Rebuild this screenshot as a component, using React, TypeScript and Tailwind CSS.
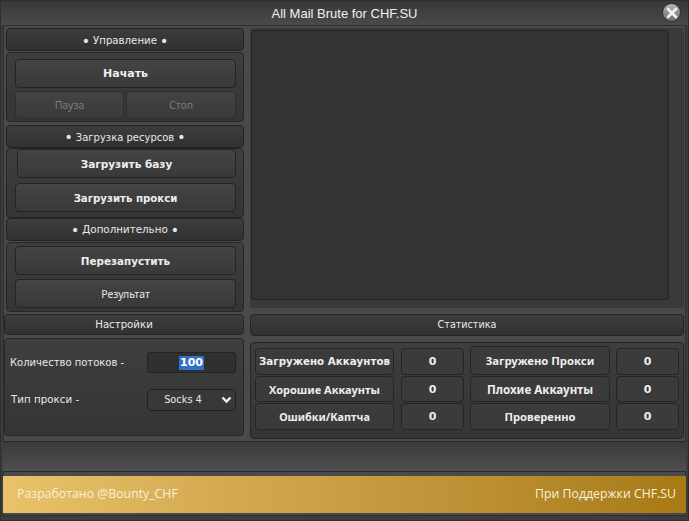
import type { ReactNode } from "react";

const font = "font-['DejaVu_Sans','Liberation_Sans',sans-serif]";

// Plain section header strip
function Header({ className, children }: { className: string; children: ReactNode }) {
  return (
    <div className={`flex items-center justify-center rounded-[4px] border border-[#232323] bg-gradient-to-b from-[#3d3d3d] to-[#313131] text-[#e8e8e8] ${className}`}>
      {children}
    </div>
  );
}

function Dot() {
  return <span className="mx-[3px] text-[14px] leading-[10px]">•</span>;
}

function Btn({ className, children, muted, thin }: { className: string; children: ReactNode; muted?: boolean; thin?: boolean }) {
  return (
    <div
      className={`flex items-center justify-center rounded-[4px] border bg-gradient-to-b from-[#444444] to-[#393939] pt-[2px] ${
        muted
          ? "border-[#2e2e2e] font-['Noto_Sans'] text-[#7b7b7b]"
          : thin
            ? "border-[#242424] font-['Noto_Sans'] text-[#e8e8e8]"
            : "border-[#242424] font-bold text-[#eeeeee]"
      } ${className}`}
    >
      {children}
    </div>
  );
}

function Cell({ className, children }: { className: string; children: ReactNode }) {
  return (
    <div className={`flex items-center justify-center whitespace-nowrap rounded-[4px] border border-[#252525] bg-[#3b3b3b] font-bold text-[#eeeeee] ${className}`}>
      {children}
    </div>
  );
}

function Panel({ className, children }: { className: string; children: ReactNode }) {
  return <div className={`rounded-[4px] border border-[#262626] bg-gradient-to-b from-[#3e3e3e] to-[#353535] ${className}`}>{children}</div>;
}

const rows = [
  { left: "Загружено Аккаунтов", leftSize: "text-[10.3px]", right: "Загружено Прокси", rightSize: "text-[11.3px]", row: "h-[28px]", h: "h-[27px] pt-[1px]" },
  { left: "Хорошие Аккаунты", leftSize: "text-[11px]", right: "Плохие Аккаунты", rightSize: "text-[11.6px]", row: "h-[27px]", h: "h-[26px] pt-[2px]" },
  { left: "Ошибки/Каптча", leftSize: "text-[10.8px]", right: "Проверенно", rightSize: "text-[11.2px]", row: "h-[27px]", h: "h-[27px] pt-[1px]" },
];

export default function App() {
  return (
    <div className={`flex h-[521px] w-[689px] flex-col overflow-hidden border border-[#2f2f2f] bg-[#3d3d3d] ${font}`}>
      {/* title */}
      <div className="relative flex h-[24px] shrink-0 items-center justify-center bg-gradient-to-b from-[#383838] to-[#4a4a4a] pt-[1px] font-['Liberation_Sans'] text-[13px] text-[#f0f0f0]">
        All Mail Brute for CHF.SU
        <div className="absolute right-[7px] top-[2px] flex h-[19px] w-[19px] items-center justify-center rounded-full border border-[#333333] bg-gradient-to-b from-[#b4b4bc] to-[#6c6c76]">
          <svg width="12" height="12" viewBox="0 0 12 12">
            <path d="M2 2 L10 10 M10 2 L2 10" stroke="#f4f4de" strokeWidth="2.8" strokeLinecap="round" />
          </svg>
        </div>
      </div>

      {/* frame */}
      <div className="mx-[2px] flex h-[491px] flex-col border border-[#2e2e2e] bg-[#4a4a4a]">
        <div className="flex pl-[2px] pt-[2px]">
          {/* controls */}
          <div className="flex w-[238px] flex-col">
            <Header className="h-[23px] pt-[2px] text-[10.2px]"><Dot />Управление<Dot /></Header>
            <Panel className="mt-[1px] flex h-[70px] flex-col pl-[8px] pt-[6px]">
              <Btn className="h-[29px] w-[221px] text-[11px]">Начать</Btn>
              <div className="mt-[3px] flex gap-[2px]">
                <Btn muted className="h-[28px] w-[109px] text-[10.5px]">Пауза</Btn>
                <Btn muted className="h-[28px] w-[110px] text-[10.5px]">Стоп</Btn>
              </div>
            </Panel>
            <Header className="mt-[3px] h-[23px] pt-[1px] text-[10px]"><Dot />Загрузка ресурсов<Dot /></Header>
            <Panel className="flex h-[70px] flex-col pl-[8px]">
              <Btn className="ml-[2px] h-[29px] w-[219px] text-[10.5px]">Загрузить базу</Btn>
              <Btn className="mt-[5px] h-[29px] w-[221px] text-[10.2px]">Загрузить прокси</Btn>
            </Panel>
            <Header className="h-[23px] text-[10.3px]"><Dot />Дополнительно<Dot /></Header>
            <Panel className="mt-[1px] flex h-[70px] flex-col pl-[8px] pt-[3px]">
              <Btn className="h-[29px] w-[221px] text-[10.4px]">Перезапустить</Btn>
              <Btn thin className="mt-[4px] h-[29px] w-[221px] text-[10.5px]">Результат</Btn>
            </Panel>
          </div>

          {/* log */}
          <div className="ml-[6px] h-[280px] w-[434px] rounded-[3px] bg-[#3a3a3a] pl-[1px] pt-[2px]">
            <div className="h-[270px] w-[418px] rounded-[3px] border border-[#242424] bg-[#333333]" />
          </div>
        </div>

        <div className="flex pt-[2px]">
          {/* settings */}
          <div className="flex w-[240px] flex-col">
            <Header className="h-[21px] text-[10.2px]">Настройки</Header>
            <Panel className="mt-[3px] h-[98px] pl-[5px] pt-[13px] text-[#e8e8e8]">
              <div className="flex h-[21px] items-center">
                <span className="w-[137px] text-[10px]">Количество потоков -</span>
                <div className="flex h-[21px] w-[89px] items-center justify-center rounded-[3px] border border-[#222222] bg-[#303030] text-[11px] font-bold text-white">
                  <span className="bg-[#3271c4] px-[1px] leading-[14px]">100</span>
                </div>
              </div>
              <div className="mt-[16px] flex h-[22px] items-center">
                <span className="w-[137px] pl-[1px] text-[10.3px]">Тип прокси -</span>
                <div className="flex h-[22px] w-[89px] items-center rounded-[4px] border border-[#222222] bg-[#383838]">
                  <span className="flex-1 pr-[3px] text-center text-[9.8px]">Socks 4</span>
                  <svg className="mr-[3px]" width="11" height="8" viewBox="0 0 11 8">
                    <path d="M1.5 1.5 L5.5 5.5 L9.5 1.5" fill="none" stroke="#f0f0f0" strokeWidth="2.4" />
                  </svg>
                </div>
              </div>
            </Panel>
          </div>

          {/* stats */}
          <div className="ml-[6px] flex w-[434px] flex-col">
            <Header className="h-[22px] text-[9.6px]">Статистика</Header>
            <Panel className="mt-[6px] h-[97px] pl-[4px] pt-[5px]">
              {rows.map((row, i) => (
                <div key={row.left} className={`flex ${row.row}`}>
                  <Cell className={`w-[139px] ${row.h} ${i === 0 ? "" : "font-['Noto_Sans']"} ${row.leftSize}`}>{row.left}</Cell>
                  <Cell className={`ml-[7px] w-[63px] text-[11px] ${row.h}`}>0</Cell>
                  <Cell className={`ml-[6px] w-[140px] font-['Noto_Sans'] ${row.rightSize} ${i === 0 ? "-mt-[2px] h-[29px] pt-[1px]" : row.h}`}>{row.right}</Cell>
                  <Cell className={`ml-[6px] w-[63px] text-[11px] ${row.h}`}>0</Cell>
                </div>
              ))}
            </Panel>
          </div>
        </div>

        {/* status bar */}
        <div className="-mx-[1px] mt-[2px] h-[31px] shrink-0 border-y border-[#2a2a2a] bg-gradient-to-b from-[#3a3a3a] to-[#4f4f4f]" />

        {/* footer */}
        <div className="-mx-[1px] mt-[4px] flex h-[37px] shrink-0 items-center justify-between bg-gradient-to-r from-[#e9c269] to-[#a87a14] pl-[14px] pr-[10px] font-['Open_Sans'] text-[12.3px] text-[#f7f1dd]">
          <span>Разработано @Bounty_CHF</span>
          <span>При Поддержки CHF.SU</span>
        </div>
      </div>
    </div>
  );
}
